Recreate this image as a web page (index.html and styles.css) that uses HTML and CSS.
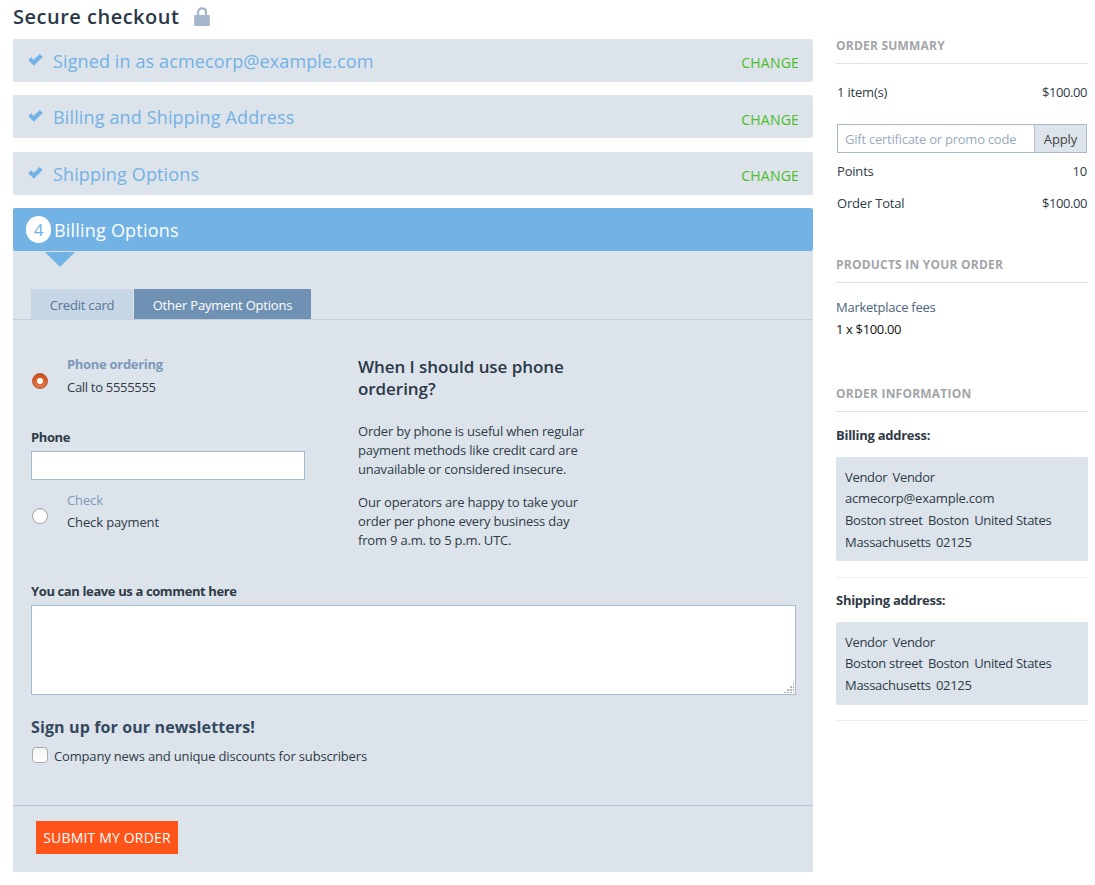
FILE: index.html
```
<!DOCTYPE html>
<html lang="en">
<head>
<meta charset="utf-8">
<title>Secure checkout</title>
<link rel="stylesheet" href="styles.css">
</head>
<body>
<div class="page">
  <main class="checkout">
    <h1 class="title"><span>Secure checkout</span>
      <svg class="lock" viewBox="0 0 16 19" width="16" height="19"><path fill="none" stroke="#a3b6cc" stroke-width="2.2" d="M4 9V5.5C4 2.8 5.6 1.4 8 1.4s4 1.4 4 4.1V9"/><rect x="0.2" y="8" width="15.6" height="11" rx="1" fill="#a3b6cc"/></svg>
    </h1>
    <section class="steps">
      <div class="step"><svg class="tick" viewBox="0 0 15 12" width="15" height="12"><path d="M0.3 6.2 3 3.2 5.8 5.7 11.8 0 14.7 2.9 5.8 11.8Z"/></svg><h2 class="step-name signed">Signed in as acmecorp@example.com</h2><a class="change">CHANGE</a></div>
      <div class="step"><svg class="tick" viewBox="0 0 15 12" width="15" height="12"><path d="M0.3 6.2 3 3.2 5.8 5.7 11.8 0 14.7 2.9 5.8 11.8Z"/></svg><h2 class="step-name">Billing and Shipping Address</h2><a class="change lower">CHANGE</a></div>
      <div class="step third"><svg class="tick" viewBox="0 0 15 12" width="15" height="12"><path d="M0.3 6.2 3 3.2 5.8 5.7 11.8 0 14.7 2.9 5.8 11.8Z"/></svg><h2 class="step-name">Shipping Options</h2><a class="change">CHANGE</a></div>
      <div class="step active"><span class="number">4</span><h2 class="step-name">Billing Options</h2></div>
    </section>
    <section class="panel">
      <nav class="tabs"><a class="tab">Credit card</a><a class="tab selected">Other Payment Options</a></nav>
      <div class="fields">
        <div class="payment">
          <div class="methods">
            <label class="method first"><span class="radio checked"></span><span class="method-text"><b>Phone ordering</b><span>Call to 5555555</span></span></label>
            <label class="label" for="phone">Phone</label>
            <input class="phone" id="phone" type="text">
            <label class="method"><span class="radio"></span><span class="method-text"><em>Check</em><span>Check payment</span></span></label>
          </div>
          <article class="help">
            <h3>When I should use phone<br>ordering?</h3>
            <p>Order by phone is useful when regular<br>payment methods like credit card are<br>unavailable or considered insecure.</p>
            <p>Our operators are happy to take your<br>order per phone every business day<br>from 9 a.m. to 5 p.m. UTC.</p>
          </article>
        </div>
        <label class="label comment-label" for="comment">You can leave us a comment here</label>
        <div class="comment-box">
          <textarea class="comment" id="comment"></textarea>
          <svg class="grip" viewBox="0 0 11 11" width="11" height="11" fill="#999"><path d="M9 0h1v2H9zM6 3h2v2H6zM9 3h1v2H9zM3 6h2v2H3zM6 6h2v2H6zM9 6h1v2H9zM0 9h2v1H0zM3 9h2v1H3zM6 9h2v1H6zM9 9h1v1H9z" opacity=".75"/></svg>
        </div>
        <h3 class="news">Sign up for our newsletters!</h3>
        <label class="subscribe"><span class="box"></span><span>Company news and unique discounts for subscribers</span></label>
      </div>
      <div class="actions"><button class="submit">SUBMIT MY ORDER</button></div>
    </section>
  </main>
  <aside class="sidebar">
    <h4 class="heading">ORDER SUMMARY</h4>
    <div class="row items"><span>1 item(s)</span><span class="price">$100.00</span></div>
    <div class="promo"><input type="text" placeholder="Gift certificate or promo code"><button>Apply</button></div>
    <div class="row points"><span>Points</span><span>10</span></div>
    <div class="row total"><span>Order Total</span><span class="price">$100.00</span></div>
    <h4 class="heading products">PRODUCTS IN YOUR ORDER</h4>
    <a class="product">Marketplace fees</a>
    <div class="qty">1 x $100.00</div>
    <h4 class="heading info">ORDER INFORMATION</h4>
    <h5 class="address-title billing">Billing address:</h5>
    <div class="address"><span>Vendor</span> <span>Vendor</span><br>acmecorp@example.com<br><span>Boston street</span> <span>Boston</span> <span>United States</span><br><span>Massachusetts</span> <span>02125</span></div>
    <h5 class="address-title shipping">Shipping address:</h5>
    <div class="address short"><span>Vendor</span> <span>Vendor</span><br><span>Boston street</span> <span>Boston</span> <span>United States</span><br><span>Massachusetts</span> <span>02125</span></div>
    <div class="end"></div>
  </aside>
</div>
</body>
</html>
```
FILE: styles.css
```
* { box-sizing: border-box; }
body { margin: 0; background: #fff; color: #2f3b47; font: 13px/20px "Open Sans", "Noto Sans", sans-serif; letter-spacing: -.19px; }
h1, h2, h3, h4, h5, p { margin: 0; }
button, input, textarea { font: inherit; letter-spacing: inherit; border-radius: 0; outline: 0; }
.page { display: flex; gap: 23px; padding-left: 13px; height: 885px; overflow: hidden; }
.checkout { width: 800px; }
.title { display: flex; height: 39px; padding-top: 3px; font-size: 20px; line-height: 28px; font-weight: 650; letter-spacing: .5px; color: #2b3848; }
.title span { width: 181px; white-space: nowrap; }
.lock { margin-top: 4px; }
.step { display: flex; height: 43px; margin-bottom: 13px; padding: 0 14px 0 15px; background: #dce3eb; border-radius: 2px; }
.step.third { margin-top: 14px; }
.tick { margin-top: 15px; fill: #73b2e4; }
.step-name { margin-left: 10px; font-size: 18px; line-height: 44px; font-weight: 400; letter-spacing: .14px; color: #73b2e4; }
.step-name.signed { letter-spacing: .12px; }
.change { margin-left: auto; padding-top: 2px; font-size: 14px; line-height: 43px; letter-spacing: .2px; color: #4bbd26; }
.change.lower { padding-top: 3px; }
.step.active { margin-bottom: 0; padding-left: 13px; background: #73b2e4; }
.number { width: 25px; height: 27px; margin-top: 8px; border-radius: 12.5px; background: #fff; color: #73b2e4; font-size: 17px; line-height: 28px; text-align: center; }
.active .step-name { margin-left: 3px; letter-spacing: .2px; color: #fff; }
.panel { position: relative; height: 621px; padding-top: 38px; background: #dce3eb; }
.panel::before { content: ""; position: absolute; top: 1px; left: 32px; border: solid transparent; border-width: 15px 15px 0; border-top-color: #73b2e4; }
.tabs { display: flex; gap: 1px; height: 31px; padding-left: 18px; border-bottom: 1px solid #c2cfdd; }
.tab { width: 102px; height: 30px; line-height: 32px; text-align: center; background: #c6d6e5; color: #587598; }
.tab.selected { width: 177px; background: #6f91b4; color: #fff; }
.fields { height: 485px; padding: 34px 17px 0 18px; }
.payment { display: flex; height: 196px; }
.methods { width: 274px; margin-right: 53px; }
.method { display: flex; height: 42px; margin-top: 10px; padding-left: 1px; letter-spacing: -.12px; }
.method.first { height: 43px; margin: 0 0 30px; letter-spacing: -.3px; }
.radio { width: 16px; height: 16px; margin-top: 18px; border-radius: 50%; border: 1px solid #aaa; background: #fff; box-shadow: inset 0 1px 1px #ddd; }
.radio.checked { margin-top: 19px; border-color: #b05a38; background: radial-gradient(circle, #fff 2.7px, transparent 3.4px), linear-gradient(#cf4b17, #e5794a); box-shadow: none; }
.method-text { display: flex; flex-direction: column; justify-content: space-between; margin-left: 19px; }
.method-text b, .method-text em { font-style: normal; color: #7e99b8; }
.label { display: block; font-weight: 700; letter-spacing: -.38px; }
.phone { display: block; width: 274px; height: 29px; margin-top: 4px; border: 1px solid #a6bacd; background: #fff; }
.help h3 { font-size: 17px; line-height: 22px; font-weight: 650; letter-spacing: -.06px; color: #2b3848; margin: 2px 0 22px; }
.help p { line-height: 19px; margin-bottom: 14px; }
.comment-label { margin-top: 31px; }
.comment-box { position: relative; height: 90px; margin-top: 4px; }
.comment { display: block; width: 765px; height: 90px; border: 1px solid #a6bacd; background: #fff; resize: none; }
.grip { position: absolute; right: 1px; bottom: 1px; }
.news { margin-top: 20px; font-size: 16px; line-height: 24px; letter-spacing: .12px; color: #34495e; }
.subscribe { display: flex; gap: 6px; margin-top: 7px; padding-left: 1px; letter-spacing: -.16px; }
.box { width: 16px; height: 16px; margin-top: 1px; border: 1px solid #aaa; border-radius: 4px; background: linear-gradient(#f3f3f3, #fff); }
.actions { padding: 15px 23px 0; border-top: 1px solid #b8c8d8; }
.submit { display: block; width: 142px; height: 33px; padding: 0; border: 0; background: #ff5419; color: #fff; font-size: 14px; letter-spacing: .17px; }
.sidebar { width: 252px; padding-top: 35px; }
.heading { height: 29px; border-bottom: 1px solid #dce1eb; font-size: 12px; line-height: 22px; letter-spacing: .22px; color: #a2a5aa; }
.row { display: flex; justify-content: space-between; padding: 0 1px; }
.price { letter-spacing: -.43px; }
.items { margin-top: 18px; }
.promo { display: flex; width: 250px; height: 29px; margin: 22px 1px 0; border: 1px solid #a6bacd; }
.promo input { width: 196px; padding: 0 7px; border: 0; letter-spacing: -.24px; }
.promo input::placeholder { color: #98abc1; opacity: 1; }
.promo button { flex: 1; padding: 0; border: 0; border-left: 1px solid #b5c0ca; background: #dce3eb; color: #444; letter-spacing: -.1px; }
.points { margin-top: 8px; }
.total { margin-top: 12px; }
.products { margin-top: 41px; }
.product { display: block; margin-top: 14px; letter-spacing: -.25px; color: #4d6580; }
.qty { margin-top: 2px; letter-spacing: -.35px; color: #111; }
.info { margin-top: 44px; }
.address-title { font-size: 13px; letter-spacing: -.27px; }
.billing { margin-top: 13px; }
.address { height: 104px; margin-top: 12px; padding: 9.5px 9px; background: #dce3eb; border-radius: 2px; line-height: 21.67px; }
.address span { letter-spacing: -.3px; }
.address span + span { margin-left: 2px; }
.address.short { height: 83px; padding-top: 9.9px; line-height: 21.6px; }
.shipping { margin-top: 16px; padding-top: 12px; border-top: 1px solid #ebedf0; }
.end { margin-top: 15px; border-top: 1px solid #ebedf0; }
```
